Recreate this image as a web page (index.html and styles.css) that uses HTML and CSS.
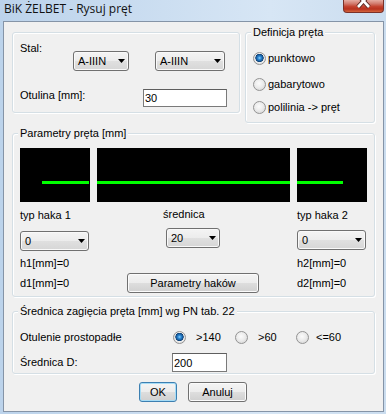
FILE: index.html
```html
<!DOCTYPE html>
<html lang="pl">
<head>
    <meta charset="UTF-8">
    <meta name="viewport" content="width=device-width, initial-scale=1.0">
    <title>BiK ŻELBET - Rysuj pręt</title>
    <link rel="stylesheet" href="styles.css">
</head>
<body>

<div class="window">

    <!-- Title bar -->
    <div class="titlebar">
        <span class="title">BiK ŻELBET - Rysuj pręt</span>
        <div class="close">
            <svg width="41" height="12" viewBox="0 0 41 12">
                <path d="M15 -5 L26 7 M26 -5 L15 7" stroke="#5b2a24" stroke-width="4.5" fill="none"/>
                <path d="M15 -5 L26 7 M26 -5 L15 7" stroke="#fff" stroke-width="2.6" fill="none"/>
            </svg>
        </div>
    </div>

    <div class="client">

        <!-- Steel / cover + bar definition -->
        <div class="top-row">
            <div class="group group-steel">
                <div class="row row-steel">
                    <span class="lbl lbl-steel">Stal:</span>
                    <div class="combo combo-steel1">
                        <span>A-IIIN</span>
                        <svg class="arrow" width="7" height="4"><path d="M0 0H7L3.5 4Z"/></svg>
                    </div>
                    <div class="combo combo-steel2">
                        <span>A-IIIN</span>
                        <svg class="arrow" width="7" height="4"><path d="M0 0H7L3.5 4Z"/></svg>
                    </div>
                </div>
                <div class="row row-cover">
                    <span class="lbl lbl-cover">Otulina [mm]:</span>
                    <input class="edit edit-cover" type="text" value="30">
                </div>
            </div>

            <fieldset class="group group-def">
                <legend>Definicja pręta</legend>
                <div class="opt opt-1"><span class="radio on"></span>punktowo</div>
                <div class="opt opt-2"><span class="radio"></span>gabarytowo</div>
                <div class="opt opt-3"><span class="radio"></span>polilinia -&gt; pręt</div>
            </fieldset>
        </div>

        <!-- Bar parameters -->
        <fieldset class="group group-params">
            <legend>Parametry pręta [mm]</legend>
            <div class="params">
                <div class="col col-side">
                    <div class="preview"><div class="bar bar-left"></div></div>
                    <span class="cap">typ haka 1</span>
                    <div class="combo combo-hook combo-hook1">
                        <span>0</span>
                        <svg class="arrow" width="7" height="4"><path d="M0 0H7L3.5 4Z"/></svg>
                    </div>
                    <span class="val val-h">h1[mm]=0</span>
                    <span class="val val-d">d1[mm]=0</span>
                </div>

                <div class="col col-mid">
                    <div class="preview"><div class="bar"></div></div>
                    <span class="cap cap-mid">średnica</span>
                    <div class="combo combo-diam">
                        <span>20</span>
                        <svg class="arrow" width="7" height="4"><path d="M0 0H7L3.5 4Z"/></svg>
                    </div>
                    <button class="btn btn-hooks">Parametry haków</button>
                </div>

                <div class="col col-side">
                    <div class="preview"><div class="bar bar-right"></div></div>
                    <span class="cap">typ haka 2</span>
                    <div class="combo combo-hook combo-hook2">
                        <span>0</span>
                        <svg class="arrow" width="7" height="4"><path d="M0 0H7L3.5 4Z"/></svg>
                    </div>
                    <span class="val val-h2">h2[mm]=0</span>
                    <span class="val val-d">d2[mm]=0</span>
                </div>
            </div>
        </fieldset>

        <!-- Bend diameter -->
        <fieldset class="group group-bend">
            <legend>Średnica zagięcia pręta [mm] wg PN tab. 22</legend>
            <div class="row row-otul">
                <span class="lbl lbl-otul">Otulenie prostopadłe</span>
                <div class="choice choice-1"><span class="radio on"></span>&gt;140</div>
                <div class="choice choice-2"><span class="radio"></span>&gt;60</div>
                <div class="choice choice-3"><span class="radio"></span>&lt;=60</div>
            </div>
            <div class="row row-diam">
                <span class="lbl lbl-diam">Średnica D:</span>
                <input class="edit edit-diam" type="text" value="200">
            </div>
        </fieldset>

        <div class="buttons">
            <button class="btn btn-ok">OK</button>
            <button class="btn btn-cancel">Anuluj</button>
        </div>

    </div>
</div>

</body>
</html>
```

FILE: styles.css
```css
* {
    box-sizing: border-box;
}

body {
    margin: 0;
    font-family: "Liberation Sans", Arial, sans-serif;
    font-size: 11px;
    line-height: 13px;
    color: #000;
    background: #fff;
}

/* Window frame */
.window {
    width: 386px;
    height: 414px;
    padding: 0 2px 2px 3px;
    display: flex;
    flex-direction: column;
    background: linear-gradient(to right, #bcd3eb 0%, #c9dcf0 35%, #d7e6f5 70%, #cbddef 100%);
}

.titlebar {
    flex: none;
    height: 21px;
    display: flex;
    align-items: flex-start;
}

.title {
    font-family: "Open Sans", "Noto Sans", sans-serif;
    font-size: 12px;
    line-height: 16px;
    padding: 1px 0 0 1px;
    color: #111;
}

.close {
    margin-left: auto;
    width: 41px;
    height: 13px;
    border: 1px solid #7b3128;
    border-top: none;
    border-radius: 0 0 4px 4px;
    background: linear-gradient(#e6aca2, #d27b6e 30%, #c4422f 55%, #b8321f 75%, #d4663e);
    overflow: hidden;
}

.close svg {
    display: block;
    margin-left: -1px;
}

.client {
    flex: 1;
    border: 1px solid #8594a7;
    background: #f0f0f0;
    padding: 4px 8px 0 8px;
    display: flex;
    flex-direction: column;
}

/* Group boxes */
.group {
    margin: 0;
    min-width: 0;
    border: 1px solid #d5dfe5;
    border-radius: 3px;
    box-shadow: inset 1px 1px 0 #fff, 1px 1px 0 #fff;
}

.group legend {
    padding: 0 2px;
    margin-left: -2px;
    line-height: 13px;
    background: #f0f0f0;
}

.row {
    display: flex;
    align-items: flex-start;
}

.lbl {
    flex: none;
}

/* Top row */
.top-row {
    display: flex;
    align-items: flex-start;
    gap: 5px;
}

.group-steel {
    width: 228px;
    height: 81px;
    margin-top: 6px;
    padding: 9px 7px 0 7px;
}

.lbl-steel {
    width: 53px;
}

.combo-steel1 {
    width: 56px;
    margin-top: 9px;
}

.combo-steel2 {
    width: 70px;
    margin-top: 9px;
    margin-left: 26px;
}

.row-cover {
    margin-top: 18px;
}

.lbl-cover {
    width: 123px;
}

.edit-cover {
    width: 84px;
    height: 18px;
}

.group-def {
    width: 130px;
    padding: 0 7px 8px 7px;
}

.opt {
    display: flex;
    align-items: center;
    height: 13px;
}

.opt .radio {
    margin-right: 2px;
}

.opt-1 {
    margin-top: 13px;
}

.opt-2 {
    margin-top: 13px;
}

.opt-3 {
    margin-top: 10px;
}

/* Controls */
.combo {
    height: 20px;
    border: 1px solid #707070;
    border-radius: 3px;
    background: linear-gradient(#f4f4f4, #ececec 50%, #e0e0e0 50%, #d6d6d6);
    box-shadow: inset 0 0 0 1px #f9f9f9;
    display: flex;
    align-items: center;
    justify-content: space-between;
    padding: 0 3px 0 4px;
}

.arrow {
    display: block;
    fill: #000;
}

.edit {
    display: block;
    margin: 0;
    border: 1px solid #7a7a7a;
    border-top-color: #5e5e5e;
    background: #fff;
    font: inherit;
    color: #000;
    padding: 0 1px;
    outline: none;
}

.btn {
    display: block;
    margin: 0;
    height: 20px;
    padding: 0;
    border: 1px solid #707070;
    border-radius: 3px;
    background: linear-gradient(#f4f4f4, #ececec 50%, #dedede 50%, #d0d0d0);
    box-shadow: inset 0 0 0 1px #fbfbfb;
    font: inherit;
    color: #000;
}

.radio {
    flex: none;
    width: 13px;
    height: 13px;
    border-radius: 50%;
    border: 1px solid #939393;
    background: radial-gradient(circle at 45% 40%, #fbfbfb 0, #ececec 45%, #cfcfcf 100%);
}

.radio.on {
    background: radial-gradient(circle at 50% 45%, #8fd3ff 0, #2d8ad6 1.6px, #165a9c 3.2px, #0e3d6e 3.9px, #eeeeee 4.4px, #dedede 80%, #cfcfcf 100%);
}

/* Bar parameters */
.group-params {
    margin-top: 4px;
    padding: 8px 7px 3px 7px;
}

.params {
    display: flex;
    gap: 7px;
}

.col {
    display: flex;
    flex-direction: column;
    align-items: flex-start;
}

.col-side {
    width: 70px;
}

.col-mid {
    width: 193px;
}

.preview {
    width: 100%;
    height: 54px;
    background: #000;
    padding-top: 33px;
}

.bar {
    height: 3px;
    background: #00ff00;
}

.bar-left {
    margin-left: 22px;
    margin-right: 1px;
}

.bar-right {
    width: 46px;
}

.cap {
    margin-top: 7px;
}

.cap-mid {
    margin-top: 6px;
    margin-left: 66px;
}

.combo-hook {
    width: 69px;
}

.combo-hook1 {
    margin-top: 9px;
}

.combo-hook2 {
    margin-top: 8px;
}

.val-h {
    margin-top: 6px;
}

.val-h2 {
    margin-top: 7px;
}

.val-d {
    margin-top: 7px;
}

.combo-diam {
    width: 54px;
    margin-top: 7px;
    margin-left: 69px;
}

.btn-hooks {
    width: 132px;
    margin-top: 25px;
    margin-left: 30px;
}

/* Bend diameter */
.group-bend {
    margin-top: 8px;
    padding: 13px 7px 1px 7px;
}

.row-otul {
    align-items: center;
}

.lbl-otul {
    width: 153px;
}

.choice {
    display: flex;
    align-items: center;
}

.choice-1 {
    width: 62px;
}

.choice-2 {
    width: 61px;
}

.choice-1 .radio,
.choice-2 .radio {
    margin-right: 10px;
}

.choice-3 .radio {
    margin-right: 7px;
}

.row-diam {
    margin-top: 9px;
    align-items: center;
}

.lbl-diam {
    width: 152px;
}

.edit-diam {
    width: 55px;
    height: 19px;
}

/* Dialog buttons */
.buttons {
    display: flex;
    gap: 11px;
    margin-top: 8px;
    margin-left: 127px;
}

.btn-ok {
    width: 38px;
    border-color: #3c7fb1;
    box-shadow: inset 0 0 0 1px #a6dcf6;
}

.btn-cancel {
    width: 59px;
}
```
